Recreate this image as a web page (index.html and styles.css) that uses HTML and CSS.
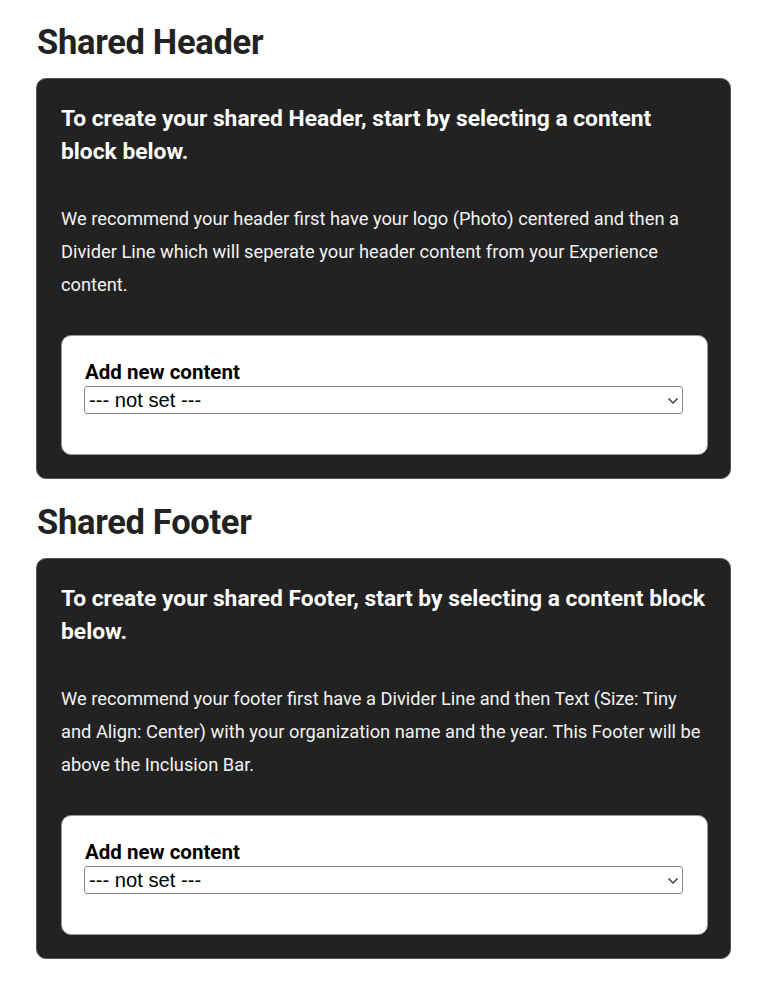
FILE: index.html
```html
<!DOCTYPE html>
<html lang="en">
<head>
  <meta charset="UTF-8" />
  <meta name="viewport" content="width=device-width, initial-scale=1.0"/>
  <title>Shared Header and Footer</title>
  <link rel="stylesheet" href="styles.css">
</head>
<body>
  <section class="shared-block">
    <h2 class="block-title">Shared Header</h2>
    <div class="block-card">
      <h3 class="card-heading">To create your shared Header, start by selecting a content block below.</h3>
      <p class="card-text">We recommend your header first have your logo (Photo) centered and then a Divider Line which will seperate your header content from your Experience content.</p>
      <div class="content-picker">
        <label for="header-content">Add new content</label>
        <div class="select-wrap">
          <select id="header-content">
            <option>--- not set ---</option>
            <option>Photo</option>
            <option>Divider Line</option>
            <option>Text</option>
          </select>
          <svg class="chevron" width="12" height="8" viewBox="0 0 12 8"><path d="M1.5 1.5 L6 6 L10.5 1.5" fill="none" stroke="#333" stroke-width="1.4"/></svg>
        </div>
      </div>
    </div>
  </section>

  <section class="shared-block">
    <h2 class="block-title">Shared Footer</h2>
    <div class="block-card">
      <h3 class="card-heading">To create your shared Footer, start by selecting a content block below.</h3>
      <p class="card-text">We recommend your footer first have a Divider Line and then Text (Size: Tiny and Align: Center) with your organization name and the year. This Footer will be above the Inclusion Bar.</p>
      <div class="content-picker">
        <label for="footer-content">Add new content</label>
        <div class="select-wrap">
          <select id="footer-content">
            <option>--- not set ---</option>
            <option>Photo</option>
            <option>Divider Line</option>
            <option>Text</option>
          </select>
          <svg class="chevron" width="12" height="8" viewBox="0 0 12 8"><path d="M1.5 1.5 L6 6 L10.5 1.5" fill="none" stroke="#333" stroke-width="1.4"/></svg>
        </div>
      </div>
    </div>
  </section>
</body>
</html>
```

FILE: styles.css
```css
body {
  margin: 0;
  padding: 17px 0 0 36px;
  font-family: Roboto, "Noto Sans", Arial, sans-serif;
  color: #222;
  background: #fff;
}

.shared-block {
  width: 695px;
  margin-bottom: 18px;
}

.block-title {
  margin: 0 0 11px 1px;
  font-size: 34.5px;
  font-weight: 700;
  line-height: 50px;
  letter-spacing: -0.3px;
  color: #222;
}

.block-card {
  box-sizing: border-box;
  height: 401px;
  padding: 23px 22px 24px 24px;
  background: #222;
  border: 1px solid #555;
  border-radius: 10px;
  color: #fff;
}

.card-heading {
  margin: 0 0 34px;
  font-size: 22.8px;
  font-weight: 700;
  line-height: 33px;
}

.card-text {
  margin: 0 0 34px;
  font-size: 18.3px;
  line-height: 33px;
  color: #f2f2f2;
}

.content-picker {
  height: 120px;
  box-sizing: border-box;
  padding: 24px 24px 0 22px;
  background: #fff;
  border: 1px solid #999;
  border-radius: 10px;
  color: #000;
}

.content-picker label {
  display: block;
  font-size: 20.5px;
  font-weight: 700;
  line-height: 24px;
  margin-left: 1px;
  margin-bottom: 2px;
}

.select-wrap {
  position: relative;
}

.select-wrap select {
  display: block;
  width: 100%;
  height: 28px;
  padding: 0 30px 0 4px;
  font-family: "Liberation Sans", Arial, sans-serif;
  font-size: 20.2px;
  color: #000;
  background: #fff;
  border: 1px solid #8a8a8a;
  border-radius: 3px;
  appearance: none;
  -webkit-appearance: none;
}

.chevron {
  position: absolute;
  right: 4px;
  top: 11px;
  pointer-events: none;
}
```
